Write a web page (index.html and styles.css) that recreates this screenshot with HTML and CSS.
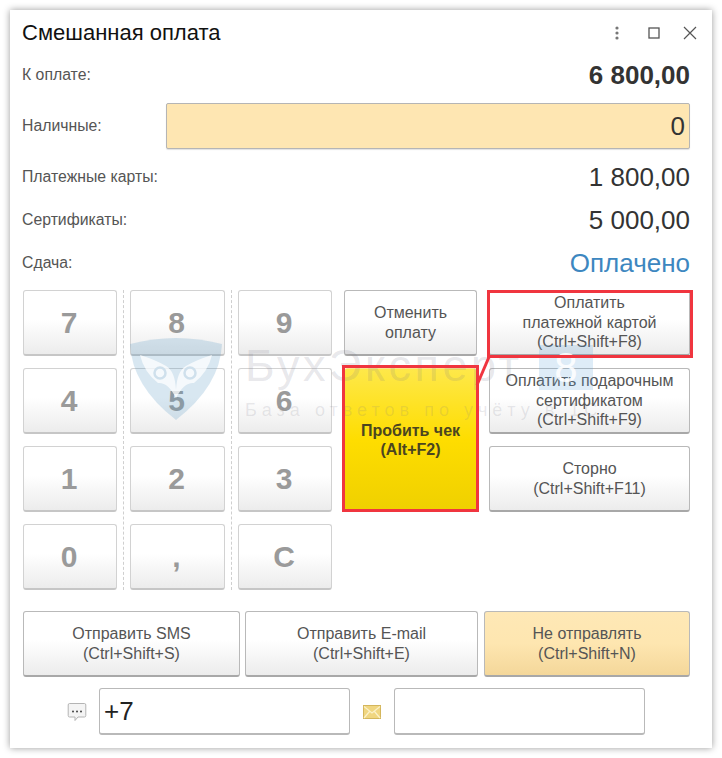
FILE: index.html
```html
<!DOCTYPE html>
<html lang="ru">
<head>
<meta charset="utf-8">
<title>Смешанная оплата</title>
<link rel="stylesheet" href="styles.css">
</head>
<body>
<main class="window">
  <header class="titlebar">
    <h1 class="title">Смешанная оплата</h1>
    <div class="win-tools">
      <svg class="tool tool-more" width="12" height="16" viewBox="0 0 12 16"><circle cx="6" cy="3" r="1.6" fill="#777"/><circle cx="6" cy="8" r="1.6" fill="#777"/><circle cx="6" cy="13" r="1.6" fill="#777"/></svg>
      <svg class="tool tool-max" width="14" height="14" viewBox="0 0 14 14"><rect x="2" y="2" width="10" height="10" fill="none" stroke="#555" stroke-width="1.3"/></svg>
      <svg class="tool" width="14" height="14" viewBox="0 0 14 14"><path d="M1 1L13 13M13 1L1 13" fill="none" stroke="#555" stroke-width="1.2"/></svg>
    </div>
  </header>

  <section class="summary">
    <div class="row"><span class="label">К оплате:</span><span class="amount amount-bold">6 800,00</span></div>
    <div class="row row-cash"><span class="label">Наличные:</span><div class="cash-input">0</div></div>
    <div class="row"><span class="label">Платежные карты:</span><span class="amount">1 800,00</span></div>
    <div class="row"><span class="label">Сертификаты:</span><span class="amount">5 000,00</span></div>
    <div class="row"><span class="label">Сдача:</span><span class="amount amount-blue">Оплачено</span></div>
  </section>

  <section class="pad">
    <div class="sep sep-1"></div>
    <div class="sep sep-2"></div>
    <button class="btn key k1">7</button><button class="btn key k2">8</button><button class="btn key k3">9</button>
    <button class="btn key k1">4</button><button class="btn key k2">5</button><button class="btn key k3">6</button>
    <button class="btn key k1">1</button><button class="btn key k2">2</button><button class="btn key k3">3</button>
    <button class="btn key k1">0</button><button class="btn key k2">,</button><button class="btn key k3">С</button>
    <button class="btn act cancel">Отменить<br>оплату</button>
    <button class="btn act pay-card">Оплатить<br>платежной картой<br>(Ctrl+Shift+F8)</button>
    <button class="btn act pay-gift">Оплатить подарочным<br>сертификатом<br>(Ctrl+Shift+F9)</button>
    <button class="btn act storno">Сторно<br>(Ctrl+Shift+F11)</button>
    <button class="btn receipt">Пробить чек<br>(Alt+F2)</button>
  </section>

  <section class="send">
    <button class="btn act send-sms">Отправить SMS<br>(Ctrl+Shift+S)</button>
    <button class="btn act send-mail">Отправить E-mail<br>(Ctrl+Shift+E)</button>
    <button class="btn act send-none">Не отправлять<br>(Ctrl+Shift+N)</button>
  </section>

  <section class="contacts">
    <svg class="c-icon" width="20" height="20" viewBox="0 0 20 20"><path d="M2.5 1.5H17.5Q18.8 1.5 18.8 3V13.5Q18.8 15 17.5 15H11L8 18.5V15H2.5Q1.2 15 1.2 13.5V3Q1.2 1.5 2.5 1.5Z" fill="#f4f4f4" stroke="#b4b4b4"/><circle cx="6" cy="9.5" r="1" fill="#444"/><circle cx="10" cy="9.5" r="1" fill="#444"/><circle cx="14" cy="9.5" r="1" fill="#444"/></svg>
    <div class="text-input phone">+7</div>
    <svg class="c-icon mail" width="18" height="14" viewBox="0 0 18 14"><rect x=".5" y=".5" width="17" height="13" fill="#f0d680" stroke="#d4b65c"/><path d="M1 1.5L9 8L17 1.5M1 13L6.5 6.5M17 13L11.5 6.5" fill="none" stroke="#fbf1c8" stroke-width="1.2"/></svg>
    <div class="text-input"></div>
  </section>

  <div class="watermark">
    <svg class="wm-shield" width="92" height="82" viewBox="0 0 92 82">
      <path d="M0 6Q46 -6 92 6Q90 48 46 82Q2 48 0 6Z" fill="#5b9ac4" fill-opacity=".24"/>
      <path d="M10 17Q26 22 36 28Q45 33 46 52Q47 33 56 28Q66 22 82 17Q78 34 64 45Q54 44 46 60Q38 44 28 45Q14 34 10 17Z" fill="#fff" fill-opacity=".75"/>
      <circle cx="30" cy="35" r="5.5" fill="none" stroke="#cfe0ec" stroke-width="2.5"/>
      <circle cx="60" cy="35" r="5.5" fill="none" stroke="#cfe0ec" stroke-width="2.5"/>
    </svg>
    <span class="wm-name">БухЭксперт</span>
    <span class="wm-eight">8</span>
    <span class="wm-sub">База ответов по учёту в 1С</span>
  </div>

  <svg class="marks" width="702" height="738" viewBox="0 0 702 738">
    <rect x="478.5" y="281.5" width="203" height="65" fill="none" stroke="#f0353f" stroke-width="3"/>
    <rect x="333.5" y="356.5" width="134" height="144" fill="none" stroke="#f0353f" stroke-width="3"/>
    <path d="M479 347L467 375" fill="none" stroke="#f0353f" stroke-width="3"/>
  </svg>
</main>
</body>
</html>
```
FILE: styles.css
```css
* { box-sizing: border-box; }
html, body { margin: 0; padding: 0; background: #fff; }
body { width: 722px; height: 758px; padding: 10px; font-family: "Liberation Sans", Arial, sans-serif; overflow: hidden; }

.window {
  position: relative;
  width: 702px;
  height: 738px;
  padding: 0 22px 0 13px;
  background: #fff;
  box-shadow: 0 0 7px rgba(0, 0, 0, .4);
}

.titlebar { display: flex; align-items: center; justify-content: space-between; height: 46px; margin-left: -1px; }
.title { margin: 0; font-size: 22px; font-weight: 400; color: #111; }
.win-tools { display: flex; align-items: center; margin-right: -7px; }
.tool { display: block; }
.tool-more { margin-right: 24px; }
.tool-max { margin-right: 22px; }

.summary { display: flex; flex-direction: column; gap: 11px; padding-top: 3px; }
.row { display: flex; align-items: center; justify-content: space-between; height: 32px; }
.row-cash { height: 46px; margin: 1px 0; }
.label { font-size: 15.8px; color: #555; margin-left: -1px; }
.amount { font-size: 26px; color: #333; }
.amount-bold { font-weight: 700; font-size: 26px; }
.amount-blue { color: #3d87c0; }
.cash-input {
  width: 524px;
  height: 46px;
  padding-right: 4px;
  background: #fee6b2;
  border: 1px solid #b5b5b5;
  border-radius: 2px;
  box-shadow: 0 1px 1px rgba(0,0,0,.12);
  font-size: 26px;
  line-height: 44px;
  text-align: right;
  color: #333;
}

.pad {
  display: grid;
  grid-template-columns: 94px 13px 95px 13px 94px 12px 133px 12px 201px;
  grid-template-rows: repeat(4, 66px);
  row-gap: 12px;
  margin-top: 11px;
}
.sep { grid-row: 1 / 5; justify-self: center; width: 0; border-left: 1px dashed #cfcfcf; }
.sep-1 { grid-column: 2; }
.sep-2 { grid-column: 4; }

.btn {
  display: block;
  margin: 0;
  padding: 0;
  border: 1px solid #d2d2d2;
  border-bottom: 2px solid #c6c6c6;
  border-radius: 3px;
  background: linear-gradient(#fff 0%, #fff 45%, #ececec 100%);
  font-family: inherit;
  text-align: center;
  width: 100%;
  height: 100%;
}
.key { font-size: 30px; font-weight: 700; color: #9a9a9a; padding-right: 2px; }
.k1 { grid-column: 1; }
.k2 { grid-column: 3; }
.k3 { grid-column: 5; }
.act { font-size: 16px; line-height: 19.5px; color: #555; border-color: #b9b9b9; border-bottom-color: #a8a8a8; }
.cancel { grid-column: 7; grid-row: 1; }
.pay-card { grid-column: 9; grid-row: 1; }
.pay-gift { grid-column: 9; grid-row: 2; }
.storno { grid-column: 9; grid-row: 3; }
.receipt {
  grid-column: 7;
  grid-row: 2 / 4;
  font-size: 16px;
  font-weight: 700;
  line-height: 19.5px;
  color: #4b4520;
  border: 1px solid #fbe48a;
  background: linear-gradient(#fee84a 0%, #fedd00 50%, #efd000 100%);
}

.send { display: grid; grid-template-columns: 217px 233px 207px; column-gap: 5px; margin-top: 21px; height: 66px; }
.send-none { margin-left: 1px; width: 206px; background: linear-gradient(#fee8b6 0%, #fee6b0 50%, #f4d79a 100%); }

.contacts { display: flex; align-items: center; margin-top: 11px; height: 47px; }
.c-icon { display: block; margin-left: 44px; margin-right: 12px; flex: none; }
.mail { margin-left: 13px; margin-right: 13px; }
.text-input {
  width: 251px;
  height: 47px;
  padding-left: 4px;
  background: #fff;
  border: 1px solid #b9b9b9;
  border-bottom-width: 2px;
  border-radius: 3px;
  font-size: 26px;
  line-height: 44px;
  color: #222;
}

.watermark { position: absolute; inset: 0; pointer-events: none; }
.wm-shield { position: absolute; left: 120px; top: 328px; }
.wm-name { position: absolute; left: 235px; top: 330px; font-size: 45px; letter-spacing: 3.5px; color: rgba(120, 120, 135, .18); white-space: nowrap; }
.wm-eight { position: absolute; left: 529px; top: 335px; width: 54px; height: 45px; background: rgba(90, 160, 215, .2); color: rgba(255, 255, 255, .9); font-size: 42px; line-height: 45px; text-align: center; }
.wm-sub { position: absolute; left: 235px; top: 390px; font-size: 18px; letter-spacing: 5px; color: rgba(120, 120, 135, .16); white-space: nowrap; }
.marks { position: absolute; left: 0; top: 0; pointer-events: none; }
```
